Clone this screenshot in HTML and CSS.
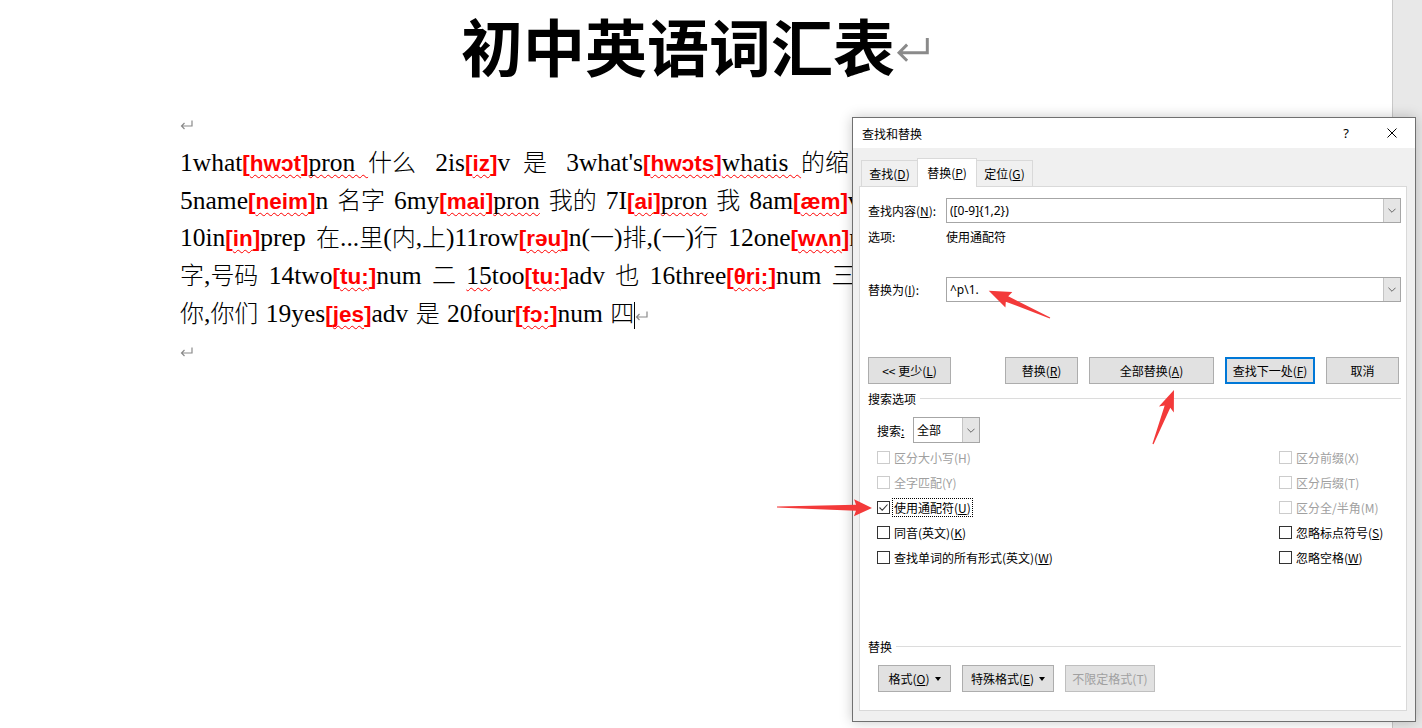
FILE: index.html
```html
<!DOCTYPE html>
<html lang="zh-CN">
<head>
<meta charset="utf-8">
<title>初中英语词汇表</title>
<link rel="stylesheet" href="styles.css">
</head>
<body>
<div class="app">
  <main class="page">
    <div class="sheet">
      <h1 class="title">初中英语词汇表<svg class="ret ret-big" viewBox="0 0 13 10"><path d="M12 0.5V6H1.5M4.5 3L1.5 6L4.5 9"/></svg></h1>
      <div class="line"><svg class="ret" viewBox="0 0 13 10"><path d="M12 0.5V6H1.5M4.5 3L1.5 6L4.5 9"/></svg></div>
      <div class="line">1what<span class="ph">[<span class="sq">hwɔt</span>]</span><span class="sq">pron  </span><span class="cj">什么</span>   2is<span class="ph">[<span class="sq">iz</span>]</span>v  <span class="cj">是</span>   3what's<span class="ph">[<span class="sq">hwɔts</span>]</span><span class="sq">whatis  </span><span class="cj">的缩</span></div>
      <div class="line ws-2">5name<span class="ph">[<span class="sq">neim</span>]</span>n <span class="cj">名字</span> 6my<span class="ph">[<span class="sq">mai</span>]</span><span class="sq">pron</span> <span class="cj">我的</span> 7I<span class="ph">[<span class="sq">ai</span>]</span><span class="sq">pron</span> <span class="cj">我</span> 8am<span class="ph">[<span class="sq">æm</span>]</span>v</div>
      <div class="line ws-3">10in<span class="ph">[<span class="sq">in</span>]</span>prep <span class="cj">在</span>...<span class="cj">里</span>(<span class="cj">内</span>,<span class="cj">上</span>)11row<span class="ph">[<span class="sq">rəu</span>]</span>n(<span class="cj">一</span>)<span class="cj">排</span>,(<span class="cj">一</span>)<span class="cj">行</span> 12one<span class="ph">[<span class="sq">wʌn</span>]</span>n</div>
      <div class="line ws-4"><span class="cj">字</span>,<span class="cj">号码</span> 14two<span class="ph">[<span class="sq">tu:</span>]</span>num <span class="cj">二</span> <span class="sq">15</span>too<span class="ph">[<span class="sq">tu:</span>]</span>adv <span class="cj">也</span> 16three<span class="ph">[<span class="sq">θri:</span>]</span>num <span class="cj">三</span></div>
      <div class="line ws-5"><span class="cj">你</span>,<span class="cj">你们</span> 19yes<span class="ph">[<span class="sq">jes</span>]</span>adv <span class="cj">是</span> 20four<span class="ph">[<span class="sq">fɔ:</span>]</span>num <span class="cj">四</span><span class="caret"></span><svg class="ret" viewBox="0 0 13 10"><path d="M12 0.5V6H1.5M4.5 3L1.5 6L4.5 9"/></svg></div>
      <div class="line"><svg class="ret" viewBox="0 0 13 10"><path d="M12 0.5V6H1.5M4.5 3L1.5 6L4.5 9"/></svg></div>
    </div>
  </main>
  <div class="vscroll"></div>
</div>

<section class="dialog">
  <header class="dlg-title">
    <span class="dlg-caption">查找和替换</span>
    <span class="dlg-btn dlg-help">?</span>
    <span class="dlg-btn dlg-close"><svg viewBox="0 0 10 10"><path d="M0.5 0.5L9.5 9.5M9.5 0.5L0.5 9.5"/></svg></span>
  </header>
  <div class="dlg-body">
    <nav class="tabs">
      <span class="tab tab-a">查找(<u>D</u>)</span>
      <span class="tab tab-b active">替换(<u>P</u>)</span>
      <span class="tab tab-a">定位(<u>G</u>)</span>
    </nav>
    <div class="panel">
      <div class="field-row find-row">
        <span class="field-label">查找内容(<u>N</u>):</span>
        <div class="combo"><span class="combo-text">([0-9]{1,2})</span><span class="combo-btn"><svg viewBox="0 0 9 5"><path d="M0.5 0.5L4.5 4.5L8.5 0.5"/></svg></span></div>
      </div>
      <div class="opt-row"><span class="field-label">选项:</span><span>使用通配符</span></div>
      <div class="field-row replace-row">
        <span class="field-label">替换为(<u>I</u>):</span>
        <div class="combo"><span class="combo-text">^p\1.</span><span class="combo-btn"><svg viewBox="0 0 9 5"><path d="M0.5 0.5L4.5 4.5L8.5 0.5"/></svg></span></div>
      </div>
      <div class="btn-row">
        <button class="btn btn-less">&lt;&lt; 更少(<u>L</u>)</button>
        <button class="btn btn-rep">替换(<u>R</u>)</button>
        <button class="btn btn-all">全部替换(<u>A</u>)</button>
        <button class="btn btn-next default">查找下一处(<u>F</u>)</button>
        <button class="btn btn-cancel">取消</button>
      </div>
      <div class="group-head search-head"><span>搜索选项</span></div>
      <div class="search-row">
        <span class="search-label">搜索<u>:</u></span>
        <div class="select"><span class="combo-text">全部</span><span class="combo-btn"><svg viewBox="0 0 9 5"><path d="M0.5 0.5L4.5 4.5L8.5 0.5"/></svg></span></div>
      </div>
      <div class="checks">
        <div class="chk disabled"><span class="box"></span><span class="lbl">区分大小写(H)</span></div>
        <div class="chk disabled"><span class="box"></span><span class="lbl">区分前缀(X)</span></div>
        <div class="chk disabled"><span class="box"></span><span class="lbl">全字匹配(Y)</span></div>
        <div class="chk disabled"><span class="box"></span><span class="lbl">区分后缀(T)</span></div>
        <div class="chk"><span class="box"><svg viewBox="0 0 11 11"><path d="M1.5 5.5L4.2 8.3L9.5 2.5"/></svg></span><span class="lbl focus">使用通配符(<u>U</u>)</span></div>
        <div class="chk disabled"><span class="box"></span><span class="lbl">区分全/半角(M)</span></div>
        <div class="chk"><span class="box"></span><span class="lbl">同音(英文)(<u>K</u>)</span></div>
        <div class="chk"><span class="box"></span><span class="lbl">忽略标点符号(<u>S</u>)</span></div>
        <div class="chk"><span class="box"></span><span class="lbl">查找单词的所有形式(英文)(<u>W</u>)</span></div>
        <div class="chk"><span class="box"></span><span class="lbl">忽略空格(<u>W</u>)</span></div>
      </div>
      <div class="group-head replace-head"><span>替换</span></div>
      <div class="fmt-row">
        <button class="btn btn-fmt">格式(<u>O</u>)<span class="tri"></span></button>
        <button class="btn btn-special">特殊格式(<u>E</u>)<span class="tri"></span></button>
        <button class="btn btn-nofmt" disabled>不限定格式(T)</button>
      </div>
    </div>
  </div>
</section>

<svg class="arrows" viewBox="0 0 1422 728">
  <g transform="translate(1050 318) rotate(203.9)">
    <polygon points="0,-0.6 47,-3 45,-8.5 67,0 45,8.5 47,3 0,0.6"/>
  </g>
  <g transform="translate(1153 444) rotate(-68.8)">
    <polygon points="0,-0.6 40,-3 37,-8 58,0 37,8 40,3 0,0.6"/>
  </g>
  <g transform="translate(777 507) rotate(0.6)">
    <polygon points="0,-0.6 79,-3 77,-8.5 95,0 77,8.5 79,3 0,0.6"/>
  </g>
</svg>
</body>
</html>
```

FILE: styles.css
```css
html, body {
  margin: 0;
  padding: 0;
}

body {
  width: 1422px;
  height: 728px;
  overflow: hidden;
  position: relative;
  background: #ffffff;
}

.app {
  display: flex;
  height: 728px;
}

.page {
  flex: 1;
  overflow: hidden;
  background: #ffffff;
}

.vscroll {
  width: 29px;
  background: #e8e8e8;
  border-left: 1px solid #c8c8c8;
}

.sheet {
  padding-left: 180px;
  width: 996px;
}

.title {
  margin: 0;
  height: 104px;
  line-height: 91px;
  font-family: "Noto Sans CJK SC", sans-serif;
  font-weight: 700;
  font-size: 62px;
  text-align: center;
  color: #000;
  white-space: nowrap;
}

.ret {
  width: 13px;
  height: 10px;
  fill: none;
  stroke: #8a8a8a;
  stroke-width: 1.2;
  vertical-align: 1px;
}

.ret-big {
  width: 35px;
  height: 28px;
  margin-right: -35px;
  stroke-width: 1.1;
  vertical-align: 8px;
}

.line {
  height: 37.75px;
  line-height: 37.75px;
  font-family: "Liberation Serif", "Noto Sans CJK SC", serif;
  font-size: 25.5px;
  color: #000;
  white-space: pre;
}

.ws-2 {
  word-spacing: 2.5px;
}

.ws-3 {
  word-spacing: 4px;
}

.ws-4 {
  word-spacing: 4px;
}

.ws-5 {
  word-spacing: 1px;
}

.cj {
  font-family: "Noto Sans CJK SC", sans-serif;
  font-size: 24px;
  font-weight: 300;
}

.ph {
  font-family: "Liberation Sans", "DejaVu Sans", "Noto Sans CJK SC", sans-serif;
  font-size: 22.5px;
  font-weight: 700;
  color: #ff0000;
}

.sq {
  text-decoration: underline wavy #ff0000;
  text-decoration-thickness: 1px;
  text-underline-offset: 3px;
  text-decoration-skip-ink: none;
}

.caret {
  display: inline-block;
  width: 1px;
  height: 27px;
  background: #000;
  vertical-align: -7px;
}

/* ---------- dialog ---------- */

.dialog {
  position: absolute;
  left: 852px;
  top: 117px;
  width: 564px;
  height: 605px;
  box-sizing: border-box;
  border: 1px solid #707070;
  background: #f0f0f0;
  box-shadow: 0 0 12px rgba(0, 0, 0, 0.22);
  display: flex;
  flex-direction: column;
  font-family: "Noto Sans CJK SC", sans-serif;
  font-size: 12px;
  color: #000;
  z-index: 2;
}

.dlg-title {
  height: 30px;
  background: #ffffff;
  display: flex;
  align-items: center;
}

.dlg-caption {
  flex: 1;
  padding-left: 9px;
  font-size: 12px;
}

.dlg-btn {
  width: 46px;
  height: 30px;
  display: flex;
  align-items: center;
  justify-content: center;
}

.dlg-help {
  font-family: "Noto Sans", sans-serif;
  font-size: 13px;
}

.dlg-close svg {
  width: 10px;
  height: 10px;
  fill: none;
  stroke: #000;
  stroke-width: 1;
}

.dlg-body {
  flex: 1;
  display: flex;
  flex-direction: column;
  padding: 10px 8px 10px 6px;
}

.tabs {
  display: flex;
  align-items: flex-end;
  height: 28px;
  padding-left: 2px;
  position: relative;
  z-index: 1;
}

.tab {
  box-sizing: border-box;
  height: 26px;
  border: 1px solid #d9d9d9;
  border-bottom: none;
  background: #f0f0f0;
  display: flex;
  align-items: center;
  justify-content: center;
  margin-right: -1px;
}

.tab-a {
  width: 57px;
}

.tab-b {
  width: 60px;
}

.tab.active {
  height: 29px;
  margin-bottom: -1px;
  background: #ffffff;
  position: relative;
  z-index: 1;
  padding-bottom: 2px;
}

.panel {
  flex: 1;
  background: #ffffff;
  border: 1px solid #d9d9d9;
  padding: 0 5px 0 8px;
  display: flex;
  flex-direction: column;
}

.field-row {
  display: flex;
  align-items: center;
  height: 25px;
}

.find-row {
  margin-top: 11px;
}

.replace-row {
  margin-top: 32px;
}

.field-label {
  width: 78px;
  flex: none;
}

.combo,
.select {
  box-sizing: border-box;
  height: 25px;
  border: 1px solid #a6a6a6;
  background: #ffffff;
  display: flex;
  align-items: stretch;
}

.combo {
  flex: 1;
}

.combo-text {
  flex: 1;
  padding-left: 3px;
  display: flex;
  align-items: center;
  font-family: "Noto Sans", "Noto Sans CJK SC", sans-serif;
  font-size: 12px;
}

.combo-btn {
  width: 16px;
  background: #e5e5e5;
  border-left: 1px solid #c4c4c4;
  display: flex;
  align-items: center;
  justify-content: center;
}

.combo-btn svg {
  width: 8px;
  height: 5px;
  fill: none;
  stroke: #555;
  stroke-width: 1;
}

.opt-row {
  display: flex;
  margin-top: 6px;
  height: 16px;
  line-height: 16px;
}

.btn-row {
  display: flex;
  margin-top: 55px;
  padding-right: 2px;
  gap: 11px;
}

.btn {
  box-sizing: border-box;
  height: 27px;
  border: 1px solid #adadad;
  background: #e1e1e1;
  font-family: "Noto Sans CJK SC", sans-serif;
  font-size: 12px;
  color: #000;
  padding: 0;
  display: flex;
  align-items: center;
  justify-content: center;
}

.btn.default {
  border: 2px solid #0078d7;
}

.btn-less {
  width: 83px;
}

.btn-rep {
  width: 73px;
  margin-left: auto;
}

.btn-all {
  width: 125px;
}

.btn-next {
  width: 90px;
}

.btn-cancel {
  width: 73px;
}

.group-head {
  display: flex;
  align-items: center;
  height: 14px;
  gap: 4px;
}

.group-head::after {
  content: "";
  flex: 1;
  border-top: 1px solid #dcdcdc;
}

.search-head {
  margin-top: 7px;
}

.search-row {
  display: flex;
  align-items: center;
  margin-top: 12px;
  height: 26px;
  padding-left: 9px;
}

.search-label {
  width: 36px;
}

.select {
  width: 67px;
  height: 26px;
}

.checks {
  margin-top: 2px;
  padding-left: 9px;
  display: grid;
  grid-template-columns: 402px 1fr;
  grid-auto-rows: 25px;
}

.chk {
  display: flex;
  align-items: center;
}

.box {
  box-sizing: border-box;
  width: 13px;
  height: 13px;
  border: 1px solid #333333;
  background: #ffffff;
  margin-right: 2px;
  display: flex;
  align-items: center;
  justify-content: center;
}

.box svg {
  width: 11px;
  height: 11px;
  fill: none;
  stroke: #333;
  stroke-width: 1.1;
}

.lbl {
  border: 1px dotted transparent;
  padding: 0 1px;
  line-height: 17px;
}

.lbl.focus {
  border-color: #000;
}

.chk.disabled .box {
  border-color: #cccccc;
}

.chk.disabled .lbl {
  color: #a0a0a0;
}

.replace-head {
  margin-top: 69px;
}

.fmt-row {
  display: flex;
  gap: 11px;
  margin-top: 12px;
  padding-left: 10px;
}

.btn-fmt {
  width: 73px;
}

.btn-special {
  width: 92px;
}

.btn-nofmt {
  width: 90px;
  color: #a0a0a0;
  border-color: #bfbfbf;
}

.tri {
  width: 0;
  height: 0;
  border-left: 3.5px solid transparent;
  border-right: 3.5px solid transparent;
  border-top: 4px solid #000;
  margin-left: 5px;
}

.arrows {
  position: absolute;
  left: 0;
  top: 0;
  width: 1422px;
  height: 728px;
  pointer-events: none;
  z-index: 3;
}

.arrows polygon {
  fill: #f33a3a;
}
```
